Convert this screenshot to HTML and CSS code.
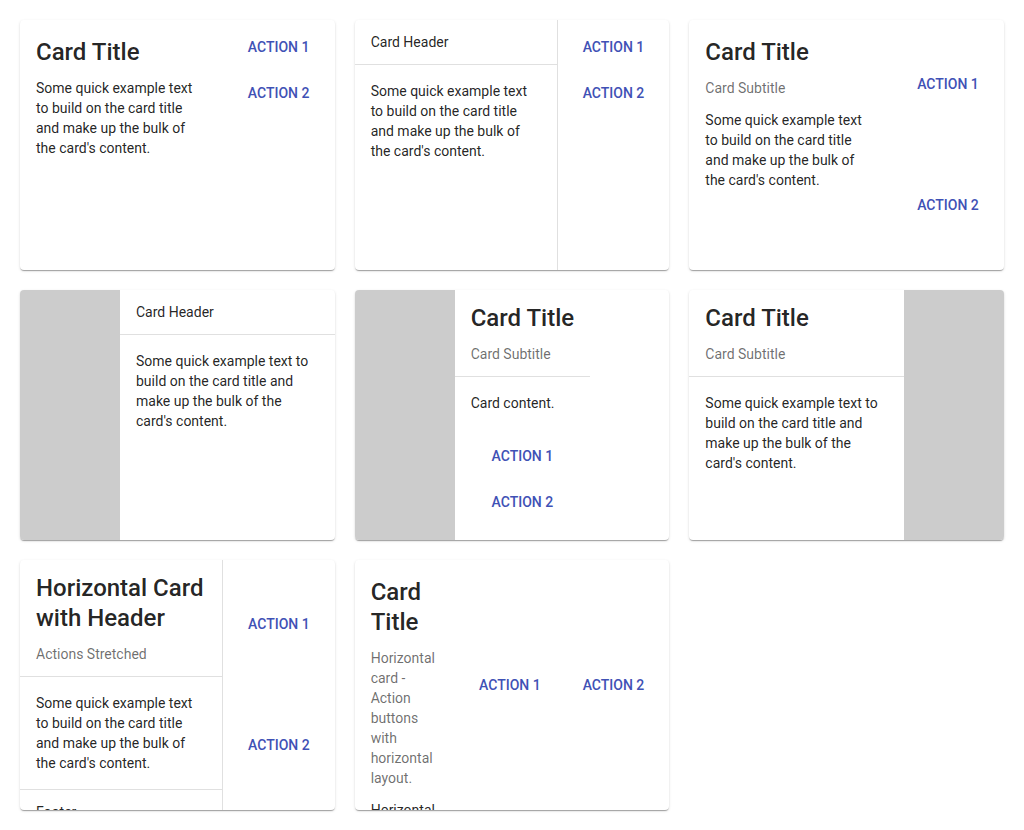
FILE: index.html
```html
<!DOCTYPE html>
<html lang="en">
<head>
<meta charset="utf-8">
<title>Cards</title>
<link rel="stylesheet" href="styles.css">
</head>
<body>
<div class="grid">

  <div class="card">
    <div class="col">
      <div class="body">
        <h3 class="title">Card Title</h3>
        <p class="text">Some quick example text to build on the card title and make up the bulk of the card's content.</p>
      </div>
    </div>
    <div class="actions">
      <button class="btn">Action 1</button>
      <button class="btn">Action 2</button>
    </div>
  </div>

  <div class="card">
    <div class="col">
      <div class="header">Card Header</div>
      <div class="body">
        <p class="text">Some quick example text to build on the card title and make up the bulk of the card's content.</p>
      </div>
    </div>
    <div class="actions divided">
      <button class="btn">Action 1</button>
      <button class="btn">Action 2</button>
    </div>
  </div>

  <div class="card">
    <div class="col">
      <div class="body">
        <h3 class="title">Card Title</h3>
        <h4 class="subtitle">Card Subtitle</h4>
        <p class="text">Some quick example text to build on the card title and make up the bulk of the card's content.</p>
      </div>
    </div>
    <div class="actions stretched">
      <button class="btn">Action 1</button>
      <button class="btn">Action 2</button>
    </div>
  </div>

  <div class="card">
    <div class="media"></div>
    <div class="col">
      <div class="header">Card Header</div>
      <div class="body">
        <p class="text">Some quick example text to build on the card title and make up the bulk of the card's content.</p>
      </div>
    </div>
  </div>

  <div class="card">
    <div class="media"></div>
    <div class="col fit">
      <div class="header">
        <h3 class="title">Card Title</h3>
        <h4 class="subtitle">Card Subtitle</h4>
      </div>
      <div class="body">
        <p class="text">Card content.</p>
      </div>
      <div class="actions auto">
        <button class="btn">Action 1</button>
        <button class="btn">Action 2</button>
      </div>
    </div>
  </div>

  <div class="card">
    <div class="col">
      <div class="header">
        <h3 class="title">Card Title</h3>
        <h4 class="subtitle">Card Subtitle</h4>
      </div>
      <div class="body">
        <p class="text">Some quick example text to build on the card title and make up the bulk of the card's content.</p>
      </div>
    </div>
    <div class="media"></div>
  </div>

  <div class="card">
    <div class="col">
      <div class="header">
        <h3 class="title">Horizontal Card with Header</h3>
        <h4 class="subtitle">Actions Stretched</h4>
      </div>
      <div class="body">
        <p class="text">Some quick example text to build on the card title and make up the bulk of the card's content.</p>
      </div>
      <div class="footer">Footer</div>
    </div>
    <div class="actions divided stretched">
      <button class="btn">Action 1</button>
      <button class="btn">Action 2</button>
    </div>
  </div>

  <div class="card">
    <div class="col">
      <div class="body">
        <h3 class="title">Card Title</h3>
        <h4 class="subtitle">Horizontal card - Action buttons with horizontal layout.</h4>
        <p class="text">Horizontal card content text.</p>
      </div>
    </div>
    <div class="actions row">
      <button class="btn">Action 1</button>
      <button class="btn">Action 2</button>
    </div>
  </div>

</div>
</body>
</html>
```

FILE: styles.css
```css
* {
  box-sizing: border-box;
}

body {
  margin: 0;
  background: #ffffff;
  font-family: Roboto, "Noto Sans", "Liberation Sans", sans-serif;
  font-size: 14px;
  line-height: 20px;
  color: rgba(0, 0, 0, 0.87);
}

.grid {
  display: grid;
  grid-template-columns: repeat(3, 1fr);
  grid-auto-rows: 250px;
  gap: 20px;
  padding: 20px;
}

.card {
  display: flex;
  background: #ffffff;
  border-radius: 4px;
  overflow: hidden;
  box-shadow: 0 2px 1px -1px rgba(0, 0, 0, 0.2),
              0 1px 1px 0 rgba(0, 0, 0, 0.14),
              0 1px 3px 0 rgba(0, 0, 0, 0.12);
}

.col {
  display: flex;
  flex-direction: column;
  flex: 1 1 auto;
  min-width: 0;
}

.col.fit {
  flex: 0 0 auto;
}

.header {
  padding: 12px 16px;
  border-bottom: 1px solid rgba(0, 0, 0, 0.12);
}

.body {
  padding: 16px;
}

.footer {
  padding: 12px 16px;
  border-top: 1px solid rgba(0, 0, 0, 0.12);
}

.title {
  margin: 0 0 11px;
  padding-top: 1px;
  font-size: 24px;
  line-height: 30px;
  font-weight: 500;
  color: rgba(0, 0, 0, 0.87);
}

.subtitle {
  margin: 0 0 12px;
  font-size: 14px;
  line-height: 20px;
  font-weight: 400;
  color: rgba(0, 0, 0, 0.58);
}

.header .title:last-child,
.header .subtitle:last-child {
  margin-bottom: 0;
}

.text {
  margin: 0;
}

.media {
  flex: 0 0 100px;
  background: #cccccc;
}

.actions {
  display: flex;
  flex-direction: column;
  flex: 0 0 112px;
  padding: 8px;
  gap: 8px;
}

.actions.auto {
  flex: none;
}

.actions.divided {
  border-left: 1px solid rgba(0, 0, 0, 0.12);
}

.actions.stretched {
  justify-content: space-around;
  padding: 3px 8px 5px;
  gap: 0;
}

.actions.row {
  flex: none;
  flex-direction: row;
  align-items: center;
  padding: 8px;
  gap: 8px;
}

.btn {
  display: flex;
  align-items: center;
  justify-content: center;
  height: 38px;
  padding: 0 17px;
  border: 0;
  background: transparent;
  color: #3f51b5;
  font-family: Roboto, "Noto Sans", "Liberation Sans", sans-serif;
  font-size: 14px;
  line-height: 20px;
  font-weight: 500;
  text-transform: uppercase;
  white-space: nowrap;
  cursor: pointer;
}
```
